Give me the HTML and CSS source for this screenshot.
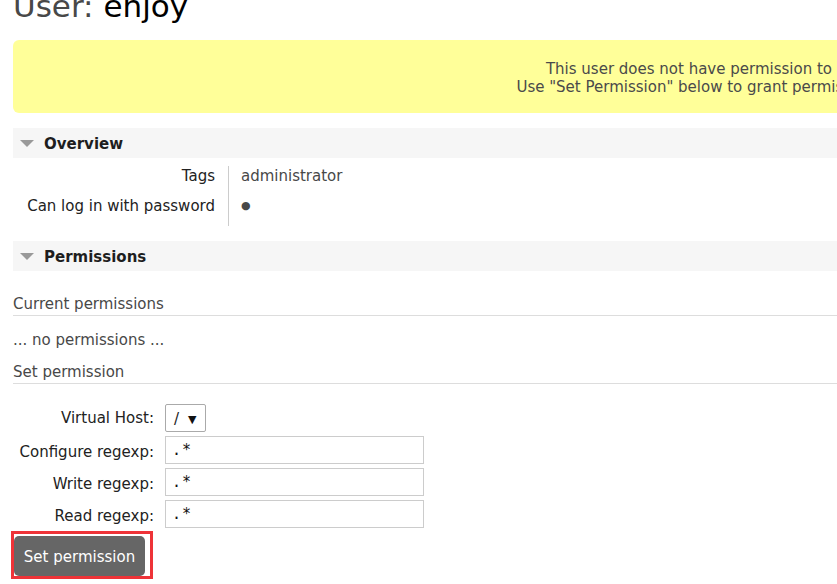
FILE: index.html
```html
<!DOCTYPE html>
<html>
<head>
<meta charset="utf-8">
<link rel="stylesheet" href="styles.css">
</head>
<body>
<div class="page">
  <h1 class="title">User: <b>enjoy</b></h1>
  <div class="warning">
    <p>This user does not have permission to access any virtual hosts.<br>Use "Set Permission" below to grant permission to access virtual hosts.</p>
  </div>

  <div class="section">
    <h2 class="section-head"><span class="tri"></span>Overview</h2>
    <div class="facts">
      <div class="fact-label">Tags</div><div class="fact-value">administrator</div>
      <div class="fact-label">Can log in with password</div><div class="fact-value">&#9679;</div>
    </div>
  </div>

  <div class="section">
    <h2 class="section-head"><span class="tri"></span>Permissions</h2>
    <h3 class="sub">Current permissions</h3>
    <p class="none">... no permissions ...</p>
    <h3 class="sub">Set permission</h3>
    <form class="perm-form">
      <label class="flabel flabel-select">Virtual Host:</label>
      <div class="fcontrol"><span class="select">/ <span class="arrow">&#9660;</span></span></div>
      <label class="flabel">Configure regexp:</label>
      <div class="fcontrol"><span class="input">.*</span></div>
      <label class="flabel">Write regexp:</label>
      <div class="fcontrol"><span class="input">.*</span></div>
      <label class="flabel">Read regexp:</label>
      <div class="fcontrol"><span class="input">.*</span></div>
    </form>
    <div class="highlight"><button class="btn" type="button">Set permission</button></div>
  </div>
</div>
</body>
</html>
```
FILE: styles.css
```css
html, body {
  margin: 0;
  padding: 0;
  overflow: hidden;
  background: #fff;
}
body {
  font-family: "DejaVu Sans", Verdana, sans-serif;
  font-size: 15px;
  color: #484848;
}
.page {
  width: 1542px;
  padding-left: 13px;
}
.title {
  margin: -11px 0 0 0;
  font-size: 31px;
  line-height: 34px;
  font-weight: normal;
  color: #484848;
  white-space: nowrap;
}
.title b {
  font-weight: normal;
  color: #000;
}
.warning {
  margin-top: 17px;
  height: 73px;
  background: #ffff99;
  border-radius: 6px;
  box-sizing: border-box;
  padding-top: 20px;
  text-align: center;
}
.warning p {
  margin: 0;
  line-height: 18px;
  color: #4a4a4a;
}
.section {
  margin-top: 15px;
}
.section-head {
  margin: 0;
  height: 30px;
  background: #f6f6f6;
  display: flex;
  align-items: center;
  font-size: 15px;
  font-weight: bold;
  color: #1e1e1e;
  padding-left: 7px;
  padding-top: 1px;
  box-sizing: border-box;
}
.tri {
  width: 0;
  height: 0;
  border-left: 7px solid transparent;
  border-right: 7px solid transparent;
  border-top: 7px solid #999;
  margin-right: 10px;
}
.facts {
  display: grid;
  grid-template-columns: 228px auto;
  margin-top: 8px;
  margin-left: -13px;
}
.fact-label {
  text-align: right;
  padding-right: 13px;
  height: 30px;
  line-height: 20px;
  color: #222;
}
.fact-value {
  border-left: 1px solid #ccc;
  padding-left: 12px;
  height: 30px;
  line-height: 20px;
  color: #484848;
}
.fact-value:last-child {
  font-size: 11px;
}
.sub {
  margin: 23px 0 0 0;
  font-size: 15px;
  font-weight: normal;
  color: #484848;
  line-height: 20px;
  padding-bottom: 1px;
  border-bottom: 1px solid #ddd;
}
.none {
  margin: 14px 0 0 0;
  line-height: 20px;
}
.none + .sub {
  margin-top: 12px;
}
.perm-form {
  display: grid;
  grid-template-columns: 165px auto;
  row-gap: 4px;
  margin-top: 20px;
  margin-left: -13px;
  align-items: center;
}
.flabel {
  text-align: right;
  padding-right: 11px;
  padding-top: 4px;
  color: #222;
}
.flabel-select {
  padding-top: 0;
}
.fcontrol {
  display: flex;
}
.select {
  box-sizing: border-box;
  width: 41px;
  height: 28px;
  border: 1px solid #aaa;
  border-radius: 2px;
  display: flex;
  align-items: center;
  padding-left: 8px;
  padding-top: 2px;
  color: #222;
  gap: 9px;
}
.arrow {
  font-size: 11px;
  color: #111;
}
.input {
  box-sizing: border-box;
  width: 259px;
  height: 28px;
  border: 1px solid #ccc;
  display: flex;
  align-items: center;
  padding-left: 6px;
  font-family: "DejaVu Sans Mono", monospace;
  color: #111;
  letter-spacing: 1px;
}
.highlight {
  margin-top: 3px;
  margin-left: -2px;
  width: 142px;
  height: 48px;
  box-sizing: border-box;
  border: 3px solid #ee3338;
  padding: 2px 0 0 0;
}
.btn {
  display: block;
  width: 131px;
  height: 40px;
  background: #666;
  color: #fff;
  border: 0;
  border-radius: 5px;
  font-family: "DejaVu Sans", Verdana, sans-serif;
  font-size: 15px;
  padding: 2px 0 0 0;
}
```
